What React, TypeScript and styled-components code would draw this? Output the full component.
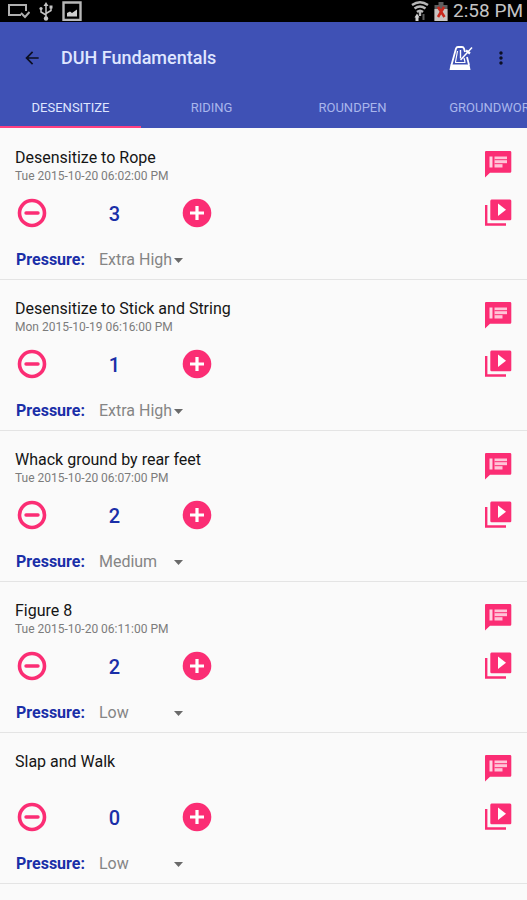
import React, { useState } from "react";
import styled, { createGlobalStyle, css } from "styled-components";
import { MdArrowBack, MdMoreVert } from "react-icons/md";

const color = {
  primary: "#3f51b5",
  navy: "#1a2fa8",
  accent: "#fb2d74",
  tabAccent: "#ff4081",
  page: "#fafafa",
  line: "#e4e4e4",
};

const GlobalStyle = createGlobalStyle`
  *, *::before, *::after { box-sizing: border-box; }
  body {
    margin: 0;
    background: ${color.page};
    font-family: Roboto, sans-serif;
    overflow-x: hidden;
  }
  button, select { font: inherit; }
`;

const Screen = styled.div`
  min-height: 100vh;
  background: ${color.page};
`;

const StatusBar = styled.div`
  display: flex;
  align-items: center;
  justify-content: space-between;
  height: 22px;
  padding: 0 4px 0 8px;
  background: #000;
  color: #c4c4c4;
`;

const StatusGroup = styled.div<{ $gap: number }>`
  display: flex;
  align-items: center;
  gap: ${(p) => p.$gap}px;
`;

const Clock = styled.time`
  font-size: 19px;
  line-height: 22px;
`;

const Header = styled.header`
  background: ${color.primary};
`;

const Toolbar = styled.div`
  display: flex;
  align-items: center;
  height: 70px;
  padding: 2px 16px 0 22px;
`;

const Title = styled.h1`
  flex: 1;
  margin: 0 0 0 19px;
  color: #dfe6ff;
  font-size: 18px;
  font-weight: 500;
  line-height: 24px;
`;

const IconButton = styled.button<{ $color: string }>`
  display: flex;
  align-items: center;
  justify-content: center;
  padding: 0;
  border: 0;
  background: none;
  color: ${(p) => p.$color};
  cursor: pointer;
`;

const Actions = styled.div`
  display: flex;
  align-items: center;
  gap: 18px;
`;

const Tabs = styled.div`
  display: flex;
  height: 36px;
  overflow: hidden;
`;

const Tab = styled.button<{ $active: boolean }>`
  flex: 0 0 141px;
  padding: 0 0 2px;
  border: 0;
  border-bottom: 2px solid transparent;
  background: none;
  color: #a9b6ec;
  font-size: 13px;
  line-height: 16px;
  cursor: pointer;
  ${(p) =>
    p.$active &&
    css`
      border-bottom-color: ${color.tabAccent};
      color: #dfe6ff;
    `}
`;

const List = styled.ul`
  margin: 0;
  padding: 1px 0 0;
  list-style: none;
`;

const Item = styled.li`
  display: flex;
  justify-content: space-between;
  height: 151px;
  padding: 19px 13px 0 15px;
  border-bottom: 1px solid ${color.line};
`;

const Details = styled.div`
  display: flex;
  flex-direction: column;
`;

const ItemTitle = styled.h2`
  margin: 0;
  color: #151515;
  font-size: 16px;
  font-weight: 400;
  line-height: 20px;
`;

const Stamp = styled.p`
  height: 16px;
  margin: 0;
  color: #7c7c7c;
  font-size: 12px;
  line-height: 16px;
`;

const Counter = styled.div`
  display: flex;
  align-items: center;
  justify-content: space-between;
  width: 199px;
  margin-top: 12px;
`;

const Count = styled.output`
  padding-top: 2px;
  color: ${color.navy};
  font-size: 20px;
  font-weight: 500;
  line-height: 24px;
`;

const Pressure = styled.div`
  display: flex;
  align-items: center;
  gap: 14px;
  margin: 18px 0 0 1px;
`;

const PressureLabel = styled.label`
  color: ${color.navy};
  font-size: 16px;
  font-weight: 700;
  line-height: 24px;
`;

const SelectBox = styled.span`
  display: grid;
  align-items: center;
  justify-items: end;
  width: 84px;
  > * {
    grid-area: 1 / 1;
  }
  > svg {
    pointer-events: none;
  }
`;

const Select = styled.select`
  width: 100%;
  height: 24px;
  padding: 0;
  border: 0;
  background: none;
  color: #858585;
  font-size: 16px;
  line-height: 24px;
  appearance: none;
`;

const Links = styled.div`
  display: flex;
  flex-direction: column;
  gap: 17px;
`;

function ScreenCheckIcon() {
  return (
    <svg width="22" height="16" viewBox="0 0 22 16" fill="none" stroke="#b0b0b0" strokeWidth="2" aria-hidden="true">
      <path d="M13 12H1V2H18V8" />
      <path d="M13 10L17 14L21.500 9" />
    </svg>
  );
}

function UsbIcon() {
  return (
    <svg width="14" height="19" viewBox="0 0 14 19" fill="none" stroke="#c4c4c4" strokeWidth="1.5" aria-hidden="true">
      <path d="M7 3V16M7 13L2 10V7M7 11.500L12 8.500V5" />
      <path d="M7 0L9.500 4H4.500Z" fill="#c4c4c4" stroke="none" />
      <circle cx="7" cy="16.500" r="2.200" fill="#c4c4c4" stroke="none" />
      <circle cx="2" cy="6.500" r="1.600" fill="#c4c4c4" stroke="none" />
      <path d="M10.500 3.500h3v3h-3z" fill="#c4c4c4" stroke="none" />
    </svg>
  );
}

function PictureIcon() {
  return (
    <svg width="20" height="20" viewBox="0 0 20 20" aria-hidden="true">
      <path d="M1.500 1.500H18.500V19H1.500Z" fill="none" stroke="#b8b8b8" strokeWidth="2.400" />
      <path d="M5 15.500V12L8 10.500L10 12L15 8.500V15.500Z" fill="#d0d0d0" />
    </svg>
  );
}

function WifiIcon() {
  return (
    <svg width="18" height="20" viewBox="0 0 18 20" aria-hidden="true">
      <g fill="none" stroke="#b8b8b8" strokeWidth="2.400">
        <path d="M1 4Q9 -1.500 17 4" />
        <path d="M3.500 7.500Q9 3.500 14.500 7.500" />
        <path d="M6 11Q9 8.500 12 11" />
      </g>
      <path d="M9 11V15" stroke="#b8b8b8" strokeWidth="2.400" />
      <path d="M6 12.500L8.500 16.500H7.500V20H4.500V16.500H3.500Z" fill="#d0d0d0" />
      <path d="M12.500 13V19" stroke="#5c5c5c" strokeWidth="2" />
    </svg>
  );
}

function BatteryIcon() {
  return (
    <svg width="14" height="19" viewBox="0 0 14 19" aria-hidden="true">
      <path d="M4.500 0H9.500V3H13.500V19H0.500V3H4.500Z" fill="#5e5e5e" />
      <path d="M0.500 7H13.500V19H0.500Z" fill="#c8c4c2" />
      <path d="M4 5L10.500 15M10 5L4 15" stroke="#c9281c" strokeWidth="2.600" />
    </svg>
  );
}

function MetronomeIcon() {
  return (
    <svg width="24" height="26" viewBox="0 0 24 26" fill="none" stroke="#fff" strokeWidth="1.800" aria-hidden="true">
      <path d="M2.500 20L7 3.500Q7.500 2 9 2H13Q14.500 2 15 3.500L16 7M18 12L20 20" />
      <path d="M11.500 5V13.500" strokeWidth="1.400" />
      <path d="M6 17.500H16.500M8.500 6L6.500 17M15 13L16 17" strokeWidth="1.200" />
      <path d="M11.500 15L23 2.500" strokeWidth="1.500" />
      <path d="M17 5.500L21 8.500" strokeWidth="2.200" />
      <path d="M1.500 19.500H20.500L21.500 25H0.500Z" fill="#fff" stroke="none" />
    </svg>
  );
}

function MinusCircleIcon() {
  return (
    <svg width="34" height="34" viewBox="0 0 34 34" fill="none" stroke="currentColor" aria-hidden="true">
      <circle cx="17" cy="17" r="12.500" strokeWidth="3.600" />
      <path d="M11 17H23" strokeWidth="3.400" strokeLinecap="round" />
    </svg>
  );
}

function PlusCircleIcon() {
  return (
    <svg width="34" height="34" viewBox="0 0 34 34" aria-hidden="true">
      <circle cx="17" cy="17" r="14.300" fill="currentColor" />
      <path d="M10 17H24M17 10V24" stroke="#fff" strokeWidth="3.200" />
    </svg>
  );
}

function NotesIcon() {
  return (
    <svg width="32" height="32" viewBox="0 0 32 32" aria-hidden="true">
      <path d="M4 3H28Q29.300 3 29.300 4.300V23.500Q29.300 24.700 28 24.700H8L3 29.500V4.300Q3 3 4 3Z" fill="currentColor" />
      <path d="M7.500 8.500H10.500V19.500H7.500Z" fill="#ffd3e1" />
      <path d="M12.500 8.500H25V16H20.500V19.500H12.500Z" fill="#ffc4d7" />
      <path d="M12.500 11.700H25M12.500 15.700H25" stroke="currentColor" strokeWidth="1" />
    </svg>
  );
}

function VideosIcon() {
  return (
    <svg width="32" height="32" viewBox="0 0 32 32" aria-hidden="true">
      <path d="M9.500 2.500H28Q29.300 2.500 29.300 4V22Q29.300 23.300 28 23.300H9.500Q8.300 23.300 8.300 22V4Q8.300 2.500 9.500 2.500Z" fill="currentColor" />
      <path d="M16 6.500V19L24 12.800Z" fill="#fff" />
      <path d="M4.200 8V27.500H24" fill="none" stroke="currentColor" strokeWidth="2.400" />
    </svg>
  );
}

const LEVELS = ["Low", "Medium", "High", "Extra High"];
const TABS = ["DESENSITIZE", "RIDING", "ROUNDPEN", "GROUNDWORK"];

type Exercise = { name: string; stamp: string; count: number; level: string };

const EXERCISES: Exercise[] = [
  { name: "Desensitize to Rope", stamp: "Tue 2015-10-20 06:02:00 PM", count: 3, level: "Extra High" },
  { name: "Desensitize to Stick and String", stamp: "Mon 2015-10-19 06:16:00 PM", count: 1, level: "Extra High" },
  { name: "Whack ground by rear feet", stamp: "Tue 2015-10-20 06:07:00 PM", count: 2, level: "Medium" },
  { name: "Figure 8", stamp: "Tue 2015-10-20 06:11:00 PM", count: 2, level: "Low" },
  { name: "Slap and Walk", stamp: "", count: 0, level: "Low" },
];

function ExerciseItem({ exercise, id }: { exercise: Exercise; id: string }) {
  const [count, setCount] = useState(exercise.count);
  return (
    <Item>
      <Details>
        <ItemTitle>{exercise.name}</ItemTitle>
        <Stamp>{exercise.stamp}</Stamp>
        <Counter>
          <IconButton $color={color.accent} aria-label="Decrease" onClick={() => setCount(Math.max(0, count - 1))}>
            <MinusCircleIcon />
          </IconButton>
          <Count>{count}</Count>
          <IconButton $color={color.accent} aria-label="Increase" onClick={() => setCount(count + 1)}>
            <PlusCircleIcon />
          </IconButton>
        </Counter>
        <Pressure>
          <PressureLabel htmlFor={id}>Pressure:</PressureLabel>
          <SelectBox>
            <Select id={id} defaultValue={exercise.level}>
              {LEVELS.map((level) => (
                <option key={level}>{level}</option>
              ))}
            </Select>
            <svg width="9" height="5" viewBox="0 0 9 5" aria-hidden="true">
              <path d="M0 0H9L4.500 5Z" fill="#6a6a6a" />
            </svg>
          </SelectBox>
        </Pressure>
      </Details>
      <Links>
        <IconButton $color={color.accent} aria-label="Notes">
          <NotesIcon />
        </IconButton>
        <IconButton $color={color.accent} aria-label="Videos">
          <VideosIcon />
        </IconButton>
      </Links>
    </Item>
  );
}

export default function App() {
  const [tab, setTab] = useState(0);
  return (
    <Screen>
      <GlobalStyle />
      <StatusBar>
        <StatusGroup $gap={9}>
          <ScreenCheckIcon />
          <UsbIcon />
          <PictureIcon />
        </StatusGroup>
        <StatusGroup $gap={5}>
          <WifiIcon />
          <BatteryIcon />
          <Clock>2:58 PM</Clock>
        </StatusGroup>
      </StatusBar>
      <Header>
        <Toolbar>
          <IconButton $color="#0c0f22" aria-label="Back">
            <MdArrowBack size={20} />
          </IconButton>
          <Title>DUH Fundamentals</Title>
          <Actions>
            <IconButton $color="#fff" aria-label="Metronome">
              <MetronomeIcon />
            </IconButton>
            <IconButton $color="#0c0f22" aria-label="More options">
              <MdMoreVert size={20} />
            </IconButton>
          </Actions>
        </Toolbar>
        <Tabs role="tablist">
          {TABS.map((name, i) => (
            <Tab key={name} role="tab" aria-selected={i === tab} $active={i === tab} onClick={() => setTab(i)}>
              {name}
            </Tab>
          ))}
        </Tabs>
      </Header>
      <List>
        {EXERCISES.map((exercise, i) => (
          <ExerciseItem key={exercise.name} exercise={exercise} id={`pressure-${i}`} />
        ))}
      </List>
    </Screen>
  );
}
